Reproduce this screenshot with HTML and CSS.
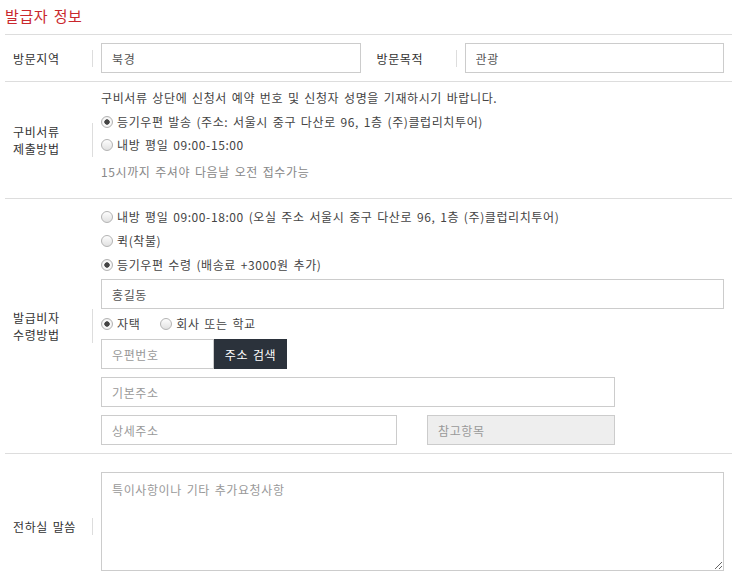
FILE: index.html
```html
<!DOCTYPE html>
<html>
<head>
  <title>발급자 정보</title>
  <link rel="stylesheet" href="styles.css">
</head>
<body>
  <div class="wrap">
    <h3 class="sec-title">발급자 정보</h3>

    <div class="row">
      <div class="half">
        <div class="label"><span>방문지역</span></div>
        <div class="field"><input type="text" class="inp" value="북경"></div>
      </div>
      <div class="half">
        <div class="label"><span>방문목적</span></div>
        <div class="field"><input type="text" class="inp" value="관광"></div>
      </div>
    </div>

    <div class="row">
      <div class="label"><span>구비서류<br>제출방법</span></div>
      <div class="field docs">
        <p class="txt">구비서류 상단에 신청서 예약 번호 및 신청자 성명을 기재하시기 바랍니다.</p>
        <label class="opt first"><input type="radio" name="submit" checked> 등기우편 발송 (주소: 서울시 중구 다산로 96, 1층 (주)클럽리치투어)</label>
        <label class="opt second"><input type="radio" name="submit"> 내방 평일 09:00-15:00</label>
        <p class="note">15시까지 주셔야 다음날 오전 접수가능</p>
      </div>
    </div>

    <div class="row">
      <div class="label"><span>발급비자<br>수령방법</span></div>
      <div class="field recv">
        <label class="opt"><input type="radio" name="recv"> 내방 평일 09:00-18:00 (오실 주소 서울시 중구 다산로 96, 1층 (주)클럽리치투어)</label>
        <label class="opt"><input type="radio" name="recv"> 퀵(착불)</label>
        <label class="opt third"><input type="radio" name="recv" checked> 등기우편 수령 (배송료 +3000원 추가)</label>
        <input type="text" class="inp name" value="홍길동">
        <div class="place">
          <label class="opt"><input type="radio" name="place" checked> 자택</label>
          <label class="opt"><input type="radio" name="place"> 회사 또는 학교</label>
        </div>
        <div class="zip">
          <input type="text" class="inp zip-code" placeholder="우편번호">
          <button type="button" class="btn-search">주소 검색</button>
        </div>
        <input type="text" class="inp addr" placeholder="기본주소">
        <div class="addr-detail">
          <input type="text" class="inp detail" placeholder="상세주소">
          <input type="text" class="inp extra" placeholder="참고항목" readonly>
        </div>
      </div>
    </div>

    <div class="row memo">
      <div class="label"><span>전하실 말씀</span></div>
      <div class="field"><textarea class="msg" placeholder="특이사항이나 기타 추가요청사항"></textarea></div>
    </div>
  </div>
</body>
</html>
```

FILE: styles.css
```css
body {
  margin: 0;
  font-family: "Noto Sans CJK KR", "Noto Sans", sans-serif;
  font-size: 12px;
  letter-spacing: 0.6px;
  word-spacing: 1.5px;
  color: #333;
  background: #fff;
}
.wrap {
  width: 727px;
  margin-left: 5px;
}
.sec-title {
  margin: 0;
  padding: 6px 0 8px;
  font-size: 15px;
  line-height: 20px;
  font-weight: normal;
  color: #c9272d;
  border-bottom: 1px solid #ddd;
}
.row {
  display: flex;
  align-items: center;
  border-bottom: 1px solid #ddd;
}
.half {
  display: flex;
  align-items: center;
  width: 50%;
}
.label {
  flex: none;
  width: 88px;
}
.label span {
  display: block;
  padding-left: 8px;
  line-height: 17px;
  border-right: 1px solid #ddd;
  color: #333;
}
.field {
  flex: 1;
  min-width: 0;
  padding: 8px;
}
.inp {
  display: block;
  box-sizing: border-box;
  width: 100%;
  height: 30px;
  padding: 0 10px;
  border: 1px solid #ccc;
  font-family: inherit;
  font-size: 12px;
  letter-spacing: inherit;
  word-spacing: inherit;
  color: #555;
  background: #fff;
  outline: none;
}
.inp::placeholder, .msg::placeholder {
  color: #999;
}
.txt, .note {
  margin: 0;
  line-height: 16px;
}
.txt {
  color: #444;
}
.note {
  margin-top: 11px;
  color: #888;
}
.docs {
  padding-bottom: 18px;
}
.opt {
  display: flex;
  align-items: center;
  line-height: 16px;
  color: #444;
}
.opt input {
  -webkit-appearance: none;
  appearance: none;
  box-sizing: border-box;
  width: 12px;
  height: 12px;
  margin: 0 4px 0 0;
  border: 1px solid #b3b3b3;
  border-radius: 50%;
  background: linear-gradient(#fdfdfd, #e1e1e1);
}
.opt input:checked {
  background: radial-gradient(circle, #444 0 2.4px, #fdfdfd 3px, #e1e1e1 100%);
}
.docs .first {
  margin-top: 8px;
}
.docs .second {
  margin-top: 7px;
}
.recv {
  padding-top: 10px;
}
.recv > .opt + .opt {
  margin-top: 8px;
}
.recv > .third {
  margin-top: 7px;
}
.name {
  margin-top: 6px;
}
.place {
  display: flex;
  gap: 20px;
  margin-top: 7px;
}
.zip {
  display: flex;
  margin-top: 7px;
}
.zip-code {
  width: 113px;
}
.btn-search {
  width: 73px;
  height: 30px;
  padding: 0;
  border: none;
  background: #2b323b;
  color: #fff;
  font-family: inherit;
  font-size: 12px;
  letter-spacing: inherit;
  word-spacing: inherit;
  cursor: pointer;
}
.addr {
  width: 514px;
  margin-top: 8px;
}
.addr-detail {
  display: flex;
  gap: 30px;
  margin-top: 8px;
}
.detail {
  width: 296px;
}
.extra {
  width: 188px;
  background: #eee;
}
.memo .field {
  padding: 18px 8px 28px;
}
.msg {
  display: block;
  box-sizing: border-box;
  width: 100%;
  height: 99px;
  padding: 8px 10px;
  border: 1px solid #ccc;
  font-family: inherit;
  font-size: 12px;
  letter-spacing: inherit;
  word-spacing: inherit;
  color: #555;
  resize: vertical;
  outline: none;
}
```
